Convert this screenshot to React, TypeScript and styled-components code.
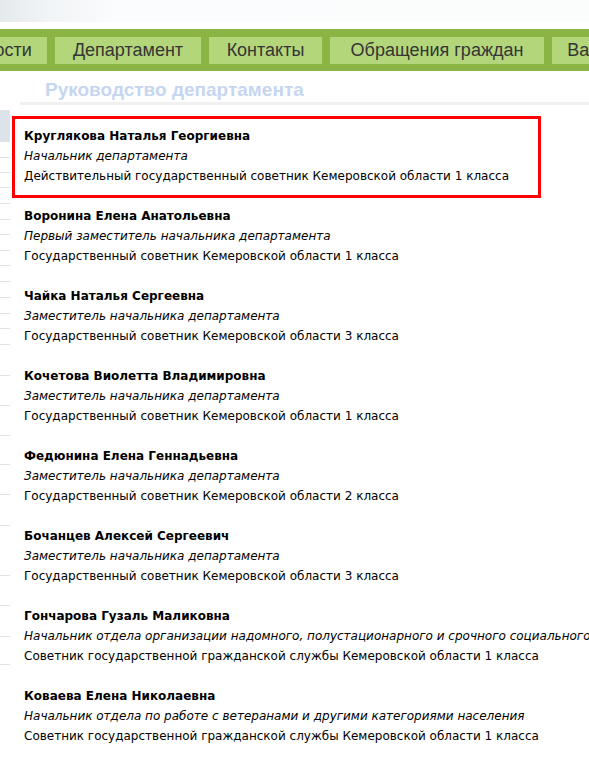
import React from "react";
import styled, { createGlobalStyle } from "styled-components";

const Global = createGlobalStyle`
  html, body { margin: 0; padding: 0; background: #fff; overflow: hidden; }
  body { width: 589px; height: 761px; }
`;

const Page = styled.div`
  width: 589px;
  height: 761px;
  overflow: hidden;
  display: flex;
  flex-direction: column;
`;

const Banner = styled.div`
  flex: 0 0 22px;
  height: 22px;
  background: linear-gradient(90deg, #e4e9ec 0%, #f1f4f6 8%, #fafcfd 20%, #fbfdfd 100%);
`;

const Spacer = styled.div`
  flex: 0 0 7px;
  height: 7px;
  background: #fff;
`;

const NavBar = styled.div`
  flex: 0 0 42px;
  height: 42px;
  background: #8ab443;
  display: flex;
  align-items: center;
  gap: 8px;
  overflow: hidden;
`;

const NavButton = styled.div<{ $offset?: number; $w: number }>`
  flex: 0 0 auto;
  width: ${(p) => p.$w}px;
  height: 27px;
  margin-left: ${(p) => (p.$offset ? `${p.$offset}px` : "0")};
  background: #b3d67b;
  color: #353535;
  font-family: "Liberation Sans", Arial, sans-serif;
  font-size: 18px;
  line-height: 27px;
  text-align: center;
  white-space: nowrap;
`;

const Body = styled.div`
  display: flex;
  flex: 1 1 auto;
  min-height: 0;
`;

const Sidebar = styled.div`
  width: 10px;
  flex: 0 0 10px;
  display: flex;
  flex-direction: column;
  padding-top: 10px;
`;

const SideItem = styled.div<{ $h: number; $active?: boolean }>`
  flex: 0 0 auto;
  height: ${(p) => p.$h}px;
  border-bottom: 1px solid #dfe3e8;
  background: ${(p) => (p.$active ? "#dde3ea" : "transparent")};
`;

const Main = styled.div`
  flex: 1;
  padding-left: 2px;
  display: flex;
  flex-direction: column;
`;

const Title = styled.h1`
  margin: 0 0 0 8px;
  padding: 7px 0 0 25px;
  height: 27px;
  font-family: "Liberation Sans", Arial, sans-serif;
  font-weight: bold;
  font-size: 19px;
  line-height: 24px;
  color: #c6d6f0;
  border-bottom: 3px solid #f0f0f0;
`;

const List = styled.div`
  display: flex;
  flex-direction: column;
  padding-top: 21px;
`;

const Entry = styled.div<{ $hl?: boolean }>`
  position: relative;
  padding-left: 12px;
  margin-bottom: 20px;
  font-family: "DejaVu Sans", Verdana, sans-serif;
  font-size: 12px;
  line-height: 20px;
  color: #000;
  white-space: nowrap;
  word-spacing: 0;

  &::after {
    content: "";
    display: ${(p) => (p.$hl ? "block" : "none")};
    position: absolute;
    left: 0;
    top: -10px;
    width: 529px;
    height: 82px;
    box-sizing: border-box;
    border: 3px solid #ff0000;
    pointer-events: none;
  }
`;

const Name = styled.div`
  font-weight: bold;
`;

const Role = styled.div`
  font-style: italic;
`;

const Rank = styled.div``;

const people = [
  ["Круглякова Наталья Георгиевна", "Начальник департамента", "Действительный государственный советник Кемеровской области 1 класса"],
  ["Воронина Елена Анатольевна", "Первый заместитель начальника департамента", "Государственный советник Кемеровской области 1 класса"],
  ["Чайка Наталья Сергеевна", "Заместитель начальника департамента", "Государственный советник Кемеровской области 3 класса"],
  ["Кочетова Виолетта Владимировна", "Заместитель начальника департамента", "Государственный советник Кемеровской области 1 класса"],
  ["Федюнина Елена Геннадьевна", "Заместитель начальника департамента", "Государственный советник Кемеровской области 2 класса"],
  ["Бочанцев Алексей Сергеевич", "Заместитель начальника департамента", "Государственный советник Кемеровской области 3 класса"],
  ["Гончарова Гузаль Маликовна", "Начальник отдела организации надомного, полустационарного и срочного социального обслуживания", "Советник государственной гражданской службы Кемеровской области 1 класса"],
  ["Коваева Елена Николаевна", "Начальник отдела по работе с ветеранами и другими категориями населения", "Советник государственной гражданской службы Кемеровской области 1 класса"],
];

const navItems: [string, number][] = [
  ["Новости", 100],
  ["Департамент", 146],
  ["Контакты", 113],
  ["Обращения граждан", 214],
  ["Вакансии", 110],
];

const sideHeights = [29, 30, 15, 14, 14, 15, 15, 14, 15, 14, 15, 15, 15, 14, 15, 30, 29, 29, 28, 29, 30, 49, 29, 30, 27];

export default function App() {
  return (
    <Page>
      <Global />
      <Banner />
      <Spacer />
      <NavBar>
        {navItems.map(([label, w], i) => (
          <NavButton key={label} $w={w} $offset={i === 0 ? -53 : 0}>
            {label}
          </NavButton>
        ))}
      </NavBar>
      <Body>
        <Sidebar>
          {sideHeights.map((h, i) => (
            <SideItem key={i} $h={h} $active={i === 1} />
          ))}
        </Sidebar>
        <Main>
          <Title>Руководство департамента</Title>
          <List>
            {people.map((p, i) => (
              <Entry key={i} $hl={i === 0}>
                <Name>{p[0]}</Name>
                <Role>{p[1]}</Role>
                <Rank>{p[2]}</Rank>
              </Entry>
            ))}
          </List>
        </Main>
      </Body>
    </Page>
  );
}
